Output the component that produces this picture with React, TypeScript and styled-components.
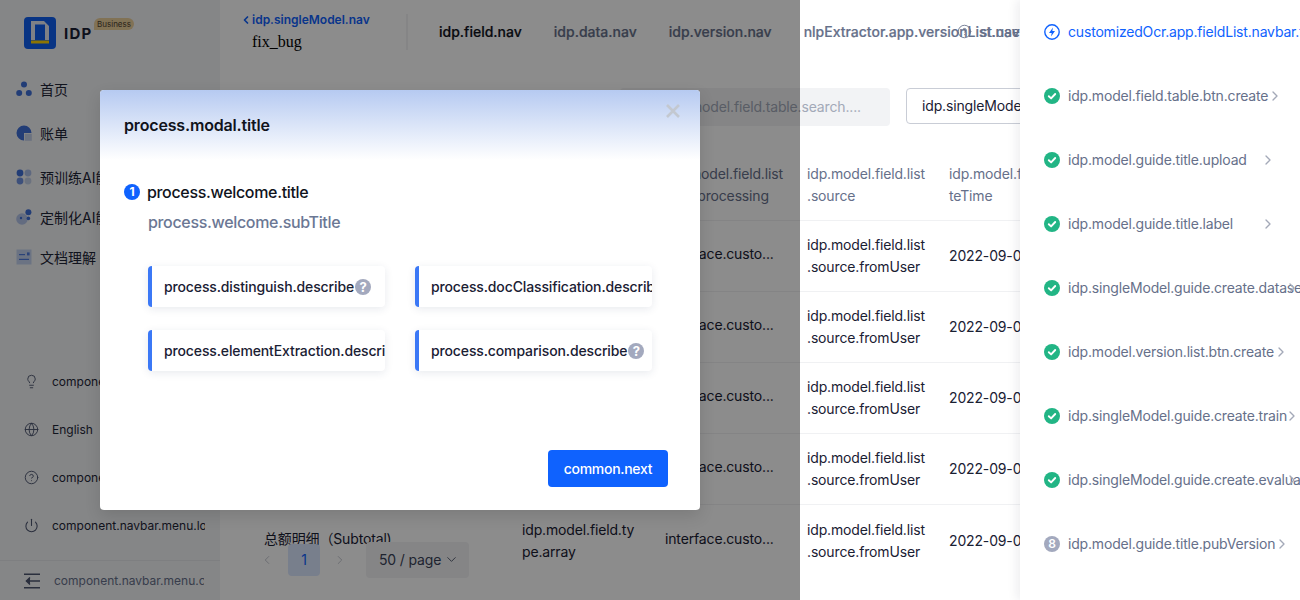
import React from 'react';
import styled, { createGlobalStyle } from 'styled-components';
import { ChevronDown, ChevronLeft, ChevronRight, CircleHelp, Globe, Lightbulb, Power } from 'lucide-react';

const GlobalStyle = createGlobalStyle`
    html, body {
        margin: 0;
        padding: 0;
        width: 1300px;
        height: 600px;
        overflow: hidden;
        background: #fff;
        font-family: Inter, "Noto Sans CJK SC", sans-serif;
    }
    * {
        box-sizing: border-box;
    }
    svg {
        flex-shrink: 0;
    }
`;

const sideMenus = ['首页', '账单', '预训练AI能力', '定制化AI能力', '文档理解'];

const tableRows = [
    { name: '发票号码', type: ['idp.model.field.ty', 'pe.text'] },
    { name: '开票日期', type: ['idp.model.field.ty', 'pe.text'] },
    { name: '购买方名称', type: ['idp.model.field.ty', 'pe.text'] },
    { name: '销售方名称', type: ['idp.model.field.ty', 'pe.text'] },
    { name: '总额明细（Subtotal)', type: ['idp.model.field.ty', 'pe.array'] },
];

const steps = [
    { label: 'idp.model.field.table.btn.create', status: 'done' },
    { label: 'idp.model.guide.title.upload', status: 'done' },
    { label: 'idp.model.guide.title.label', status: 'done' },
    { label: 'idp.singleModel.guide.create.dataset', status: 'done' },
    { label: 'idp.model.version.list.btn.create', status: 'done' },
    { label: 'idp.singleModel.guide.create.train', status: 'done' },
    { label: 'idp.singleModel.guide.create.evaluate', status: 'done' },
    { label: 'idp.model.guide.title.pubVersion', status: 'todo' },
];

const SideIcon: React.FC<{ index: number }> = ({ index }) => {
    if (index === 0) {
        return (
            <svg width="16" height="16" viewBox="0 0 16 16">
                <circle cx="8" cy="3.6" r="3" fill="#3f6fd8" />
                <circle cx="3.2" cy="12" r="3" fill="#3f6fd8" />
                <circle cx="12.8" cy="12" r="3" fill="#3f6fd8" />
            </svg>
        );
    }
    if (index === 1) {
        return (
            <svg width="16" height="16" viewBox="0 0 16 16">
                <path d="M8 0.5a7.5 7.5 0 1 0 0 15V8h7.5A7.5 7.5 0 0 0 8 0.5z" fill="#3f6fd8" />
                <rect x="8.8" y="8.8" width="7" height="7" fill="#c3cfe8" />
            </svg>
        );
    }
    if (index === 2) {
        return (
            <svg width="16" height="16" viewBox="0 0 16 16">
                <circle cx="4" cy="4" r="3.4" fill="#3f6fd8" />
                <circle cx="12" cy="4" r="3.4" fill="#a9bde8" />
                <circle cx="4" cy="12" r="3.4" fill="#6f93e0" />
                <circle cx="12" cy="12" r="3.4" fill="#c3cfe8" />
            </svg>
        );
    }
    if (index === 3) {
        return (
            <svg width="16" height="16" viewBox="0 0 16 16">
                <circle cx="6" cy="10" r="5.8" fill="#b4c5ea" />
                <circle cx="12.4" cy="3.2" r="3" fill="#3f6fd8" />
                <circle cx="12.4" cy="9.4" r="1.8" fill="#3f6fd8" />
                <circle cx="5" cy="9" r="1.2" fill="#3f6fd8" />
            </svg>
        );
    }
    return (
        <svg width="16" height="16" viewBox="0 0 16 16">
            <rect x="0.5" y="0.5" width="15" height="15" fill="#c3d1ee" />
            <rect x="3" y="5" width="6" height="1.2" fill="#4f7bdc" />
            <rect x="3" y="9.8" width="10" height="1.2" fill="#4f7bdc" />
            <rect x="11" y="3.4" width="2.6" height="3" fill="#4f7bdc" />
        </svg>
    );
};

const Logo = () => (
    <svg width="32" height="32" viewBox="0 0 32 32">
        <rect width="32" height="32" rx="4" fill="#0f5ff0" />
        <path d="M7 4h13l5 5v14h-4V9h-10v14H7z" fill="#e8ecf4" />
        <rect x="11" y="7.5" width="10" height="15.5" fill="#0f5ff0" />
        <rect x="7" y="23.5" width="18" height="3" fill="#ffd60a" />
    </svg>
);

const CheckIcon = () => (
    <svg width="16" height="16" viewBox="0 0 16 16">
        <circle cx="8" cy="8" r="8" fill="#22b585" />
        <path d="M4.8 8.2l2.3 2.2 4.1-4.4" fill="none" stroke="#fff" strokeWidth="1.9" strokeLinecap="round" strokeLinejoin="round" />
    </svg>
);

const BoltIcon = () => (
    <svg width="16" height="16" viewBox="0 0 16 16">
        <circle cx="8" cy="8" r="7.2" fill="none" stroke="#0f62fe" strokeWidth="1.4" />
        <path d="M9 3.4L5 8.9h2.7L7 12.6l4-5.5H8.3z" fill="#0f62fe" />
    </svg>
);

const CollapseIcon = () => (
    <svg width="16" height="16" viewBox="0 0 16 16" fill="none" stroke="#4d5670" strokeWidth="1.4">
        <path d="M0 1.2h16M0 14.8h16M16 8H2.5" />
        <path d="M6 4.6L2.4 8 6 11.4" fill="#4d5670" />
    </svg>
);

const App: React.FC = () => {
    return (
        <StyledPage>
            <GlobalStyle />
            <StyledSidebar>
                <StyledBrand>
                    <Logo />
                    <StyledBrandName>IDP</StyledBrandName>
                    <StyledBusinessBadge>Business</StyledBusinessBadge>
                </StyledBrand>
                <StyledSideNav>
                    {sideMenus.map((menu, i) => (
                        <StyledSideItem key={menu}>
                            <SideIcon index={i} />
                            <span>{menu}</span>
                        </StyledSideItem>
                    ))}
                </StyledSideNav>
                <StyledBottomMenu>
                    <StyledBottomItem>
                        <Lightbulb size={15} strokeWidth={1.5} />
                        <StyledBottomText>component.navbar.menu.idea</StyledBottomText>
                    </StyledBottomItem>
                    <StyledBottomItem>
                        <Globe size={15} strokeWidth={1.5} />
                        <StyledBottomText>English</StyledBottomText>
                    </StyledBottomItem>
                    <StyledBottomItem>
                        <CircleHelp size={15} strokeWidth={1.5} />
                        <StyledBottomText>component.navbar.menu.help</StyledBottomText>
                    </StyledBottomItem>
                    <StyledBottomItem>
                        <Power size={15} strokeWidth={1.7} />
                        <StyledBottomText>component.navbar.menu.logout</StyledBottomText>
                    </StyledBottomItem>
                </StyledBottomMenu>
                <StyledCollapseRow>
                    <CollapseIcon />
                    <StyledCollapseText>component.navbar.menu.collapse</StyledCollapseText>
                </StyledCollapseRow>
            </StyledSidebar>

            <StyledMain>
                <StyledHeader>
                    <StyledBackBlock>
                        <StyledBackLink>
                            <ChevronLeft size={12} strokeWidth={3.5} />
                            idp.singleModel.nav
                        </StyledBackLink>
                        <StyledModelName>fix_bug</StyledModelName>
                    </StyledBackBlock>
                    <StyledTabs>
                        <StyledTab $active>idp.field.nav</StyledTab>
                        <StyledTab>idp.data.nav</StyledTab>
                        <StyledTab>idp.version.nav</StyledTab>
                        <StyledTab>nlpExtractor.app.versionList.nav</StyledTab>
                    </StyledTabs>
                    <StyledHeaderAction>
                        <CircleHelp size={15} strokeWidth={1.4} />
                        <span>st.use.nav</span>
                    </StyledHeaderAction>
                </StyledHeader>

                <StyledToolbar>
                    <StyledSearch>idp.model.field.table.search....</StyledSearch>
                    <StyledOutlineButton>idp.singleModel.guide.create</StyledOutlineButton>
                </StyledToolbar>

                <StyledTable>
                    <StyledHeadRow>
                        <span>idp.model.field.list.name</span>
                        <span>idp.model.field.list.type</span>
                        <span>
                            idp.model.field.list
                            <br />
                            .postprocessing
                        </span>
                        <span>
                            idp.model.field.list
                            <br />
                            .source
                        </span>
                        <span>
                            idp.model.field.list.crea
                            <br />
                            teTime
                        </span>
                    </StyledHeadRow>
                    {tableRows.map((row) => (
                        <StyledRow key={row.name}>
                            <StyledRaisedCell>{row.name}</StyledRaisedCell>
                            <span>
                                {row.type[0]}
                                <br />
                                {row.type[1]}
                            </span>
                            <StyledRaisedCell>interface.custo...</StyledRaisedCell>
                            <span>
                                idp.model.field.list
                                <br />
                                .source.fromUser
                            </span>
                            <span>2022-09-01 10:20:30</span>
                        </StyledRow>
                    ))}
                </StyledTable>

                <StyledPagination>
                    <ChevronLeft size={14} strokeWidth={1.3} color="#b4b8c2" />
                    <StyledPageNumber>1</StyledPageNumber>
                    <ChevronRight size={14} strokeWidth={1.3} color="#b4b8c2" />
                    <StyledPageSize>
                        50 / page
                        <ChevronDown size={15} strokeWidth={1.3} />
                    </StyledPageSize>
                </StyledPagination>
            </StyledMain>

            <StyledDrawer>
                <StyledStep>
                    <BoltIcon />
                    <StyledStepText $current>customizedOcr.app.fieldList.navbar.field</StyledStepText>
                </StyledStep>
                {steps.map((step, i) => (
                    <StyledStep key={step.label}>
                        {step.status === 'done' ? <CheckIcon /> : <StyledTodoNumber>{i + 1}</StyledTodoNumber>}
                        <StyledStepText>{step.label}</StyledStepText>
                        <StyledStepArrow size={16} strokeWidth={2} />
                    </StyledStep>
                ))}
            </StyledDrawer>

            <StyledMask />

            <StyledModal>
                <StyledModalHead>
                    <StyledModalTitle>process.modal.title</StyledModalTitle>
                    <StyledClose viewBox="0 0 14 14">
                        <path d="M1 1l12 12M13 1L1 13" fill="none" stroke="#c3c8d0" strokeWidth="2.6" />
                    </StyledClose>
                </StyledModalHead>
                <StyledModalBody>
                    <StyledWelcome>
                        <StyledStepNumber>1</StyledStepNumber>
                        process.welcome.title
                    </StyledWelcome>
                    <StyledSubTitle>process.welcome.subTitle</StyledSubTitle>
                    <StyledCardGrid>
                        <StyledCard>
                            <StyledCardText>process.distinguish.describe</StyledCardText>
                            <StyledHelpDot>?</StyledHelpDot>
                        </StyledCard>
                        <StyledCard>
                            <StyledCardText>process.docClassification.describe</StyledCardText>
                            <StyledHelpDot>?</StyledHelpDot>
                        </StyledCard>
                        <StyledCard>
                            <StyledCardText>process.elementExtraction.describe</StyledCardText>
                            <StyledHelpDot>?</StyledHelpDot>
                        </StyledCard>
                        <StyledCard>
                            <StyledCardText>process.comparison.describe</StyledCardText>
                            <StyledHelpDot>?</StyledHelpDot>
                        </StyledCard>
                    </StyledCardGrid>
                </StyledModalBody>
                <StyledModalFoot>
                    <StyledPrimaryButton>common.next</StyledPrimaryButton>
                </StyledModalFoot>
            </StyledModal>
        </StyledPage>
    );
};

const StyledPage = styled.div`
    position: relative;
    display: flex;
    width: 1300px;
    height: 600px;
    overflow: hidden;
    background: #fff;
    color: #1a2033;
`;

const StyledSidebar = styled.aside`
    display: flex;
    flex-direction: column;
    flex: 0 0 220px;
    height: 600px;
    background: #f3f4f6;
`;

const StyledBrand = styled.div`
    position: relative;
    display: flex;
    align-items: center;
    height: 69px;
    padding: 0 0 3px 24px;
`;

const StyledBrandName = styled.span`
    margin-left: 8px;
    font-size: 15px;
    font-weight: 700;
    letter-spacing: 1.2px;
    color: #1a2033;
`;

const StyledBusinessBadge = styled.span`
    position: absolute;
    top: 18px;
    left: 94px;
    width: 40px;
    height: 12px;
    border-radius: 6px 6px 6px 0;
    background: #eccf9c;
    color: #4d4230;
    font-size: 8px;
    line-height: 12px;
    text-align: center;
`;

const StyledSideNav = styled.nav`
    display: flex;
    flex-direction: column;
`;

const StyledSideItem = styled.div`
    display: flex;
    align-items: center;
    gap: 8px;
    height: 40px;
    padding-left: 16px;
    font-size: 14px;
    color: #1f2638;
    white-space: nowrap;
    &:nth-child(-n + 2) {
        margin-bottom: 4px;
    }
`;

const StyledBottomMenu = styled.div`
    display: flex;
    flex-direction: column;
    margin-top: auto;
    margin-bottom: 11px;
`;

const StyledBottomItem = styled.div`
    display: flex;
    align-items: center;
    gap: 13px;
    height: 48px;
    padding-left: 24px;
    color: #4d5670;
`;

const StyledBottomText = styled.span`
    width: 153px;
    overflow: hidden;
    white-space: nowrap;
    font-size: 12px;
    color: #1f2638;
`;

const StyledCollapseRow = styled.div`
    display: flex;
    align-items: center;
    gap: 14px;
    height: 40px;
    padding-left: 24px;
    border-top: 1px solid #e6e8ec;
`;

const StyledCollapseText = styled.span`
    width: 150px;
    overflow: hidden;
    white-space: nowrap;
    font-size: 12px;
    color: #66708a;
`;

const StyledMain = styled.main`
    position: relative;
    flex: 1;
    min-width: 0;
    overflow: hidden;
`;

const StyledHeader = styled.header`
    position: relative;
    display: flex;
    align-items: center;
    height: 64px;
    white-space: nowrap;
`;

const StyledBackBlock = styled.div`
    display: flex;
    flex: 0 0 188px;
    flex-direction: column;
    justify-content: center;
    height: 36px;
    padding-left: 20px;
    border-right: 2px solid #f2f3f5;
`;

const StyledBackLink = styled.div`
    display: flex;
    align-items: center;
    height: 14px;
    margin-top: -1px;
    font-size: 12px;
    font-weight: 600;
    color: #0f62fe;
`;

const StyledModelName = styled.div`
    margin: 6px 0 0 12px;
    font-family: "Liberation Serif", serif;
    font-size: 16px;
    line-height: 18px;
    color: #000;
`;

const StyledTabs = styled.div`
    display: flex;
    gap: 32px;
    padding: 0 0 1px 31px;
`;

const StyledTab = styled.span<{ $active?: boolean }>`
    font-size: 14px;
    font-weight: 500;
    -webkit-text-stroke: 0.2px currentColor;
    color: ${({ $active }) => ($active ? '#10131c' : '#66708a')};
`;

const StyledHeaderAction = styled.div`
    position: absolute;
    top: 23px;
    left: 737px;
    display: flex;
    align-items: center;
    gap: 8px;
    font-size: 14px;
    color: #66708a;
`;

const StyledToolbar = styled.div`
    display: flex;
    gap: 16px;
    margin-top: 24px;
    padding-left: 400px;
`;

const StyledSearch = styled.div`
    flex: 0 0 270px;
    height: 38px;
    padding-left: 46px;
    border-radius: 4px;
    background: #f2f3f5;
    color: #a3a9b8;
    font-size: 14px;
    letter-spacing: -0.15px;
    line-height: 38px;
    white-space: nowrap;
`;

const StyledOutlineButton = styled.div`
    flex-shrink: 0;
    height: 36px;
    padding: 0 15px;
    border: 1px solid #c9cdd6;
    border-radius: 4px;
    color: #1a2033;
    font-size: 14px;
    letter-spacing: -0.15px;
    line-height: 34px;
    white-space: nowrap;
`;

const StyledTable = styled.div`
    margin-top: 24px;
    margin-left: 24px;
    width: 1000px;
    font-size: 14px;
    letter-spacing: -0.15px;
    line-height: 22px;
`;

const StyledHeadRow = styled.div`
    display: grid;
    grid-template-columns: 258px 143px 142px 142px 1fr;
    align-items: center;
    height: 71px;
    padding-left: 20px;
    border-bottom: 1px solid #f0f1f3;
    color: #66708a;
    white-space: nowrap;
    &:last-child {
        border-bottom: 0;
    }
`;

const StyledRow = styled(StyledHeadRow)`
    color: #1a2033;
`;

const StyledRaisedCell = styled.span`
    padding-bottom: 4px;
`;

const StyledPagination = styled.div`
    position: absolute;
    top: 542px;
    left: 40px;
    display: flex;
    align-items: center;
    height: 36px;
    font-size: 14px;
    color: #1a2033;
`;

const StyledPageNumber = styled.span`
    width: 32px;
    height: 32px;
    margin: 0 13px 0 14px;
    border-radius: 4px;
    background: #dbe7ff;
    color: #0f62fe;
    line-height: 32px;
    text-align: center;
`;

const StyledPageSize = styled.span`
    display: flex;
    align-items: center;
    justify-content: space-between;
    width: 103px;
    height: 36px;
    margin-left: 19px;
    padding: 0 10px 2px 13px;
    border-radius: 4px;
    background: #f2f3f5;
    color: #3a4258;
    letter-spacing: -0.15px;
`;

const StyledDrawer = styled.aside`
    position: absolute;
    top: 0;
    right: 0;
    display: flex;
    flex-direction: column;
    width: 280px;
    height: 600px;
    overflow: hidden;
    background: #fff;
    box-shadow: -3px 0 10px rgba(20, 30, 50, 0.08);
`;

const StyledStep = styled.div`
    display: flex;
    flex-shrink: 0;
    align-items: center;
    height: 64px;
    padding-left: 24px;
    white-space: nowrap;
`;

const StyledStepText = styled.span<{ $current?: boolean }>`
    min-width: 193px;
    margin: 0 0 1px 8px;
    font-size: 14px;
    letter-spacing: -0.18px;
    color: ${({ $current }) => ($current ? '#0f62fe' : '#66708a')};
`;

const StyledStepArrow = styled(ChevronRight)`
    margin-left: -1px;
    color: #a3a9b8;
`;

const StyledTodoNumber = styled.span`
    flex-shrink: 0;
    width: 16px;
    height: 16px;
    border-radius: 50%;
    background: #a3a9be;
    color: #fff;
    font-size: 12px;
    font-weight: 600;
    line-height: 16px;
    text-align: center;
`;

const StyledMask = styled.div`
    position: absolute;
    top: 0;
    left: 0;
    width: 800px;
    height: 600px;
    background: rgba(0, 0, 0, 0.45);
`;

const StyledModal = styled.section`
    position: absolute;
    top: 90px;
    left: 100px;
    display: flex;
    flex-direction: column;
    width: 600px;
    height: 420px;
    overflow: hidden;
    border-radius: 4px;
    background: #fff;
    box-shadow: 0 6px 16px rgba(0, 0, 0, 0.12);
`;

const StyledModalHead = styled.div`
    position: relative;
    flex: 0 0 70px;
    padding: 24px 24px 0;
    background: linear-gradient(180deg, #b6caf1 0%, #fff 100%);
`;

const StyledModalTitle = styled.h2`
    margin: 0;
    font-size: 16px;
    font-weight: 600;
    letter-spacing: -0.16px;
    line-height: 22px;
    color: #10131c;
`;

const StyledClose = styled.svg`
    position: absolute;
    top: 14px;
    right: 20px;
    width: 14px;
    height: 14px;
`;

const StyledModalBody = styled.div`
    flex: 1;
    padding: 21px 24px 0;
`;

const StyledWelcome = styled.div`
    display: flex;
    align-items: center;
    gap: 7px;
    font-size: 16px;
    font-weight: 500;
    letter-spacing: -0.33px;
    line-height: 22px;
    color: #10131c;
`;

const StyledStepNumber = styled.span`
    width: 16px;
    height: 16px;
    border-radius: 50%;
    background: #0f62fe;
    color: #fff;
    font-size: 12px;
    font-weight: 700;
    letter-spacing: 0;
    line-height: 16px;
    text-align: center;
`;

const StyledSubTitle = styled.div`
    margin: 8px 0 0 24px;
    font-size: 16px;
    font-weight: 500;
    letter-spacing: -0.33px;
    line-height: 22px;
    color: #6b7794;
`;

const StyledCardGrid = styled.div`
    display: grid;
    grid-template-columns: 237px 237px;
    gap: 23px 30px;
    margin: 33px 0 0 24px;
`;

const StyledCard = styled.div`
    display: flex;
    align-items: center;
    height: 41px;
    padding-left: 12px;
    overflow: hidden;
    border-left: 4px solid #3b78f6;
    border-radius: 4px;
    background: #fff;
    box-shadow: 0 2px 8px rgba(30, 50, 90, 0.1);
    white-space: nowrap;
`;

const StyledCardText = styled.span`
    flex-shrink: 0;
    font-size: 14px;
    font-weight: 500;
    letter-spacing: -0.13px;
    color: #1a2033;
`;

const StyledHelpDot = styled.span`
    flex-shrink: 0;
    width: 16px;
    height: 16px;
    margin-left: 1px;
    border-radius: 50%;
    background: #a3a9be;
    color: #fff;
    font-size: 13px;
    font-weight: 700;
    line-height: 16px;
    text-align: center;
`;

const StyledModalFoot = styled.div`
    display: flex;
    justify-content: flex-end;
    padding: 0 32px 23px 0;
`;

const StyledPrimaryButton = styled.div`
    width: 120px;
    height: 37px;
    border-radius: 4px;
    background: #0f62fe;
    color: #fff;
    font-size: 14px;
    font-weight: 500;
    letter-spacing: -0.3px;
    line-height: 37px;
    text-align: center;
`;

export default App;
